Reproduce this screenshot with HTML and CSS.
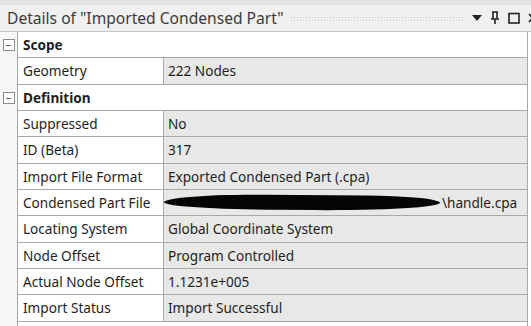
FILE: index.html
```html
<!DOCTYPE html>
<html lang="en">
<head>
    <meta charset="UTF-8">
    <title>Details of "Imported Condensed Part"</title>
    <link rel="stylesheet" href="styles.css">
</head>
<body>
    <div class="panel">
        <!-- title bar -->
        <div class="titlebar">
            <span class="title">Details of "Imported Condensed Part"</span>
            <span class="grip"></span>
            <span class="tb-icons">
                <svg width="10" height="8" viewBox="0 0 10 8"><path d="M0 1 H10 L5 7 Z" fill="#222"/></svg>
                <svg width="10" height="14" viewBox="0 0 10 14"><path d="M2 1 H8 M3 1 V8 M7 1 V8 M1 8 H9 M5 8 V13" stroke="#222" stroke-width="1.6" fill="none"/></svg>
                <svg width="12" height="12" viewBox="0 0 12 12"><rect x="1" y="1.5" width="10" height="9.5" stroke="#222" stroke-width="1.6" fill="none"/></svg>
                <svg width="6" height="12" viewBox="0 0 6 12"><path d="M1 2 L8 10 M8 2 L1 10" stroke="#222" stroke-width="1.6"/></svg>
            </span>
        </div>

        <!-- property grid -->
        <div class="grid">
            <div class="row group">
                <div class="gutter"><span class="toggle">−</span></div>
                <div class="cell head">Scope</div>
            </div>
            <div class="row">
                <div class="gutter"></div>
                <div class="cell label">Geometry</div>
                <div class="cell value">222 Nodes</div>
            </div>
            <div class="row group">
                <div class="gutter"><span class="toggle">−</span></div>
                <div class="cell head">Definition</div>
            </div>
            <div class="row">
                <div class="gutter"></div>
                <div class="cell label">Suppressed</div>
                <div class="cell value">No</div>
            </div>
            <div class="row">
                <div class="gutter"></div>
                <div class="cell label">ID (Beta)</div>
                <div class="cell value">317</div>
            </div>
            <div class="row">
                <div class="gutter"></div>
                <div class="cell label">Import File Format</div>
                <div class="cell value">Exported Condensed Part (.cpa)</div>
            </div>
            <div class="row">
                <div class="gutter"></div>
                <div class="cell label">Condensed Part File</div>
                <div class="cell value"><span class="redact"></span>\handle.cpa</div>
            </div>
            <div class="row">
                <div class="gutter"></div>
                <div class="cell label">Locating System</div>
                <div class="cell value">Global Coordinate System</div>
            </div>
            <div class="row">
                <div class="gutter"></div>
                <div class="cell label">Node Offset</div>
                <div class="cell value">Program Controlled</div>
            </div>
            <div class="row">
                <div class="gutter"></div>
                <div class="cell label">Actual Node Offset</div>
                <div class="cell value">1.1231e+005</div>
            </div>
            <div class="row">
                <div class="gutter"></div>
                <div class="cell label">Import Status</div>
                <div class="cell value">Import Successful</div>
            </div>
            <div class="row">
                <div class="gutter"></div>
                <div class="cell head"></div>
            </div>
        </div>
    </div>
</body>
</html>
```

FILE: styles.css
```css
body {
    margin: 0;
    background-color: #ffffff;
    font-family: 'Noto Sans', 'Open Sans', sans-serif;
    color: #1e1e1e;
    overflow: hidden;
}
.panel {
    width: 531px;
    height: 326px;
    overflow: hidden;
    border-top: 5px solid #e4e4e4;
    box-sizing: border-box;
}
.titlebar {
    display: flex;
    align-items: center;
    height: 26px;
    padding-left: 7px;
    background-color: #f0f0f0;
    border-bottom: 1px solid #c8c8c8;
}
.title {
    font-size: 15.6px;
    color: #3a3a3a;
    white-space: nowrap;
}
.grip {
    flex: 1;
    height: 5px;
    margin: 0 8px 0 6px;
    background-image: radial-gradient(#c4c4c4 0.7px, transparent 0.8px);
    background-size: 3px 3px;
}
.tb-icons {
    display: flex;
    align-items: center;
    gap: 8px;
    margin-right: -3px;
}
.grid {
    display: flex;
    flex-direction: column;
}
.row {
    display: grid;
    grid-template-columns: 18px 146px 364px;
    height: 26.33px;
    flex-shrink: 0;
}
.gutter {
    background-color: #f7f7f7;
    border-right: 1px solid #a8a8a8;
    display: flex;
    align-items: center;
    justify-content: center;
}
.toggle {
    display: flex;
    align-items: center;
    justify-content: center;
    width: 10px;
    height: 10px;
    border: 1px solid #8a8a8a;
    background-color: #ffffff;
    font-size: 10px;
    line-height: 1;
    color: #222;
}
.cell {
    display: flex;
    align-items: center;
    padding-left: 5px;
    font-size: 13.6px;
    white-space: nowrap;
    overflow: hidden;
    border-bottom: 1px solid #a8a8a8;
    border-right: 1px solid #a8a8a8;
}
.head {
    grid-column: 2 / 4;
    font-weight: bold;
    background-color: #ffffff;
}
.label {
    background-color: #ffffff;
}
.value {
    background-color: #e8e8e6;
    padding-left: 4px;
}
.redact {
    display: inline-block;
    width: 276px;
    height: 15px;
    margin-left: -4px;
    margin-right: 2px;
    background-color: #050505;
    border-radius: 40% 30% 50% 45% / 60% 50% 60% 50%;
    transform: rotate(0.4deg);
}
```
